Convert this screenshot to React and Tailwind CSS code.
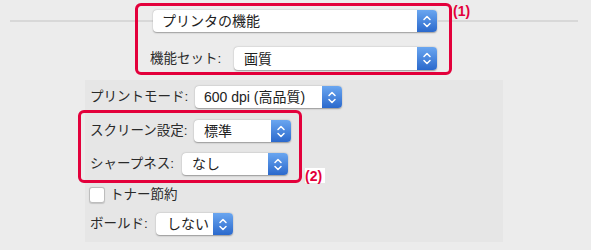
import React from "react";

const FONT = { fontFamily: '"Liberation Sans","Noto Sans CJK JP",sans-serif' };

function Chevrons() {
  return (
    <svg width="10" height="15" viewBox="0 0 10 15" fill="none">
      <path d="M2 5.5 L5 2.5 L8 5.5" stroke="white" strokeWidth="1.5" strokeLinecap="round" strokeLinejoin="round" />
      <path d="M2 9.5 L5 12.5 L8 9.5" stroke="white" strokeWidth="1.5" strokeLinecap="round" strokeLinejoin="round" />
    </svg>
  );
}

function Popup({ text, w, h = "h-[22px]", pad = "pl-[9px]" }) {
  return (
    <div
      className={`${w} ${h} flex items-stretch bg-white rounded-[4px] shadow-[0_0.5px_1.5px_rgba(0,0,0,0.35)] shrink-0`}
    >
      <div className={`flex-1 flex items-center ${pad} text-[14px] leading-none text-[#222] whitespace-nowrap overflow-hidden`}>
        {text}
      </div>
      <div className="w-[20px] flex items-center justify-center rounded-r-[4px] bg-gradient-to-b from-[#6aa6f0] to-[#2b69cc]">
        <Chevrons />
      </div>
    </div>
  );
}

function Row({ label, lw, children, className = "" }) {
  return (
    <div className={`flex items-center ${className}`}>
      <div className={`${lw} shrink-0 text-[13.5px] leading-none text-[#2a2a2a] whitespace-nowrap`}>{label}</div>
      {children}
    </div>
  );
}

export default function App() {
  return (
    <div className="relative w-[591px] h-[250px] bg-[#ececec] overflow-hidden" style={FONT}>
      {/* header with separator */}
      <div className="flex items-center pt-[10px] pl-[10px]">
        <div className="w-[143px] h-[2px] bg-[#d8d8d8]" />
        <Popup text="プリンタの機能" w="w-[284px]" />
        <div className="w-[141px] h-[2px] bg-[#d8d8d8]" />
      </div>

      <Row label="機能セット:" lw="w-[84px]" className="pl-[150px] mt-[15px]">
        <Popup text="画質" w="w-[203px]" h="h-[23px]" pad="pl-[10px]" />
      </Row>

      {/* settings panel */}
      <div className="ml-[85px] mt-[10px] w-[418px] h-[162px] bg-[#e6e6e6] pl-[5px] pt-[6px] flex flex-col">
        <Row label="プリントモード:" lw="w-[105px]">
          <Popup text="600 dpi (高品質)" w="w-[147px]" />
        </Row>
        <Row label="スクリーン設定:" lw="w-[104px]" className="mt-[12px]">
          <Popup text="標準" w="w-[97px]" pad="pl-[10px]" />
        </Row>
        <Row label="シャープネス:" lw="w-[92px]" className="mt-[11px]">
          <Popup text="なし" w="w-[106px]" pad="pl-[10px]" />
        </Row>
        <div className="flex items-center mt-[12px] ml-[-1px]">
          <div className="w-[16px] h-[16px] bg-white rounded-[3px] border border-[#bdbdbd] shadow-[0_0.5px_1px_rgba(0,0,0,0.15)]" />
          <div className="ml-[5px] text-[13.5px] leading-none text-[#2a2a2a]">トナー節約</div>
        </div>
        <Row label="ボールド:" lw="w-[66px]" className="mt-[10px]">
          <Popup text="しない" w="w-[77px]" pad="pl-[11px]" />
        </Row>
      </div>

      {/* annotation overlays */}
      <div className="absolute left-[135px] top-[3px] w-[317px] h-[72px] border-[3px] border-[#e3003b] rounded-[6px]" />
      <div className="absolute left-[453px] top-[4px] text-[14px] font-bold leading-none text-[#e3003b]" style={{ fontFamily: '"Liberation Sans",sans-serif' }}>
        (1)
      </div>
      <div className="absolute left-[305px] top-[168px] w-[20px] h-[15px] bg-white" />
      <div className="absolute left-[78px] top-[110px] w-[224px] h-[73px] border-[3px] border-[#e3003b] rounded-[6px]" />
      <div className="absolute left-[305px] top-[169px] text-[14px] font-bold leading-none text-[#e3003b]" style={{ fontFamily: '"Liberation Sans",sans-serif' }}>
        (2)
      </div>
    </div>
  );
}
